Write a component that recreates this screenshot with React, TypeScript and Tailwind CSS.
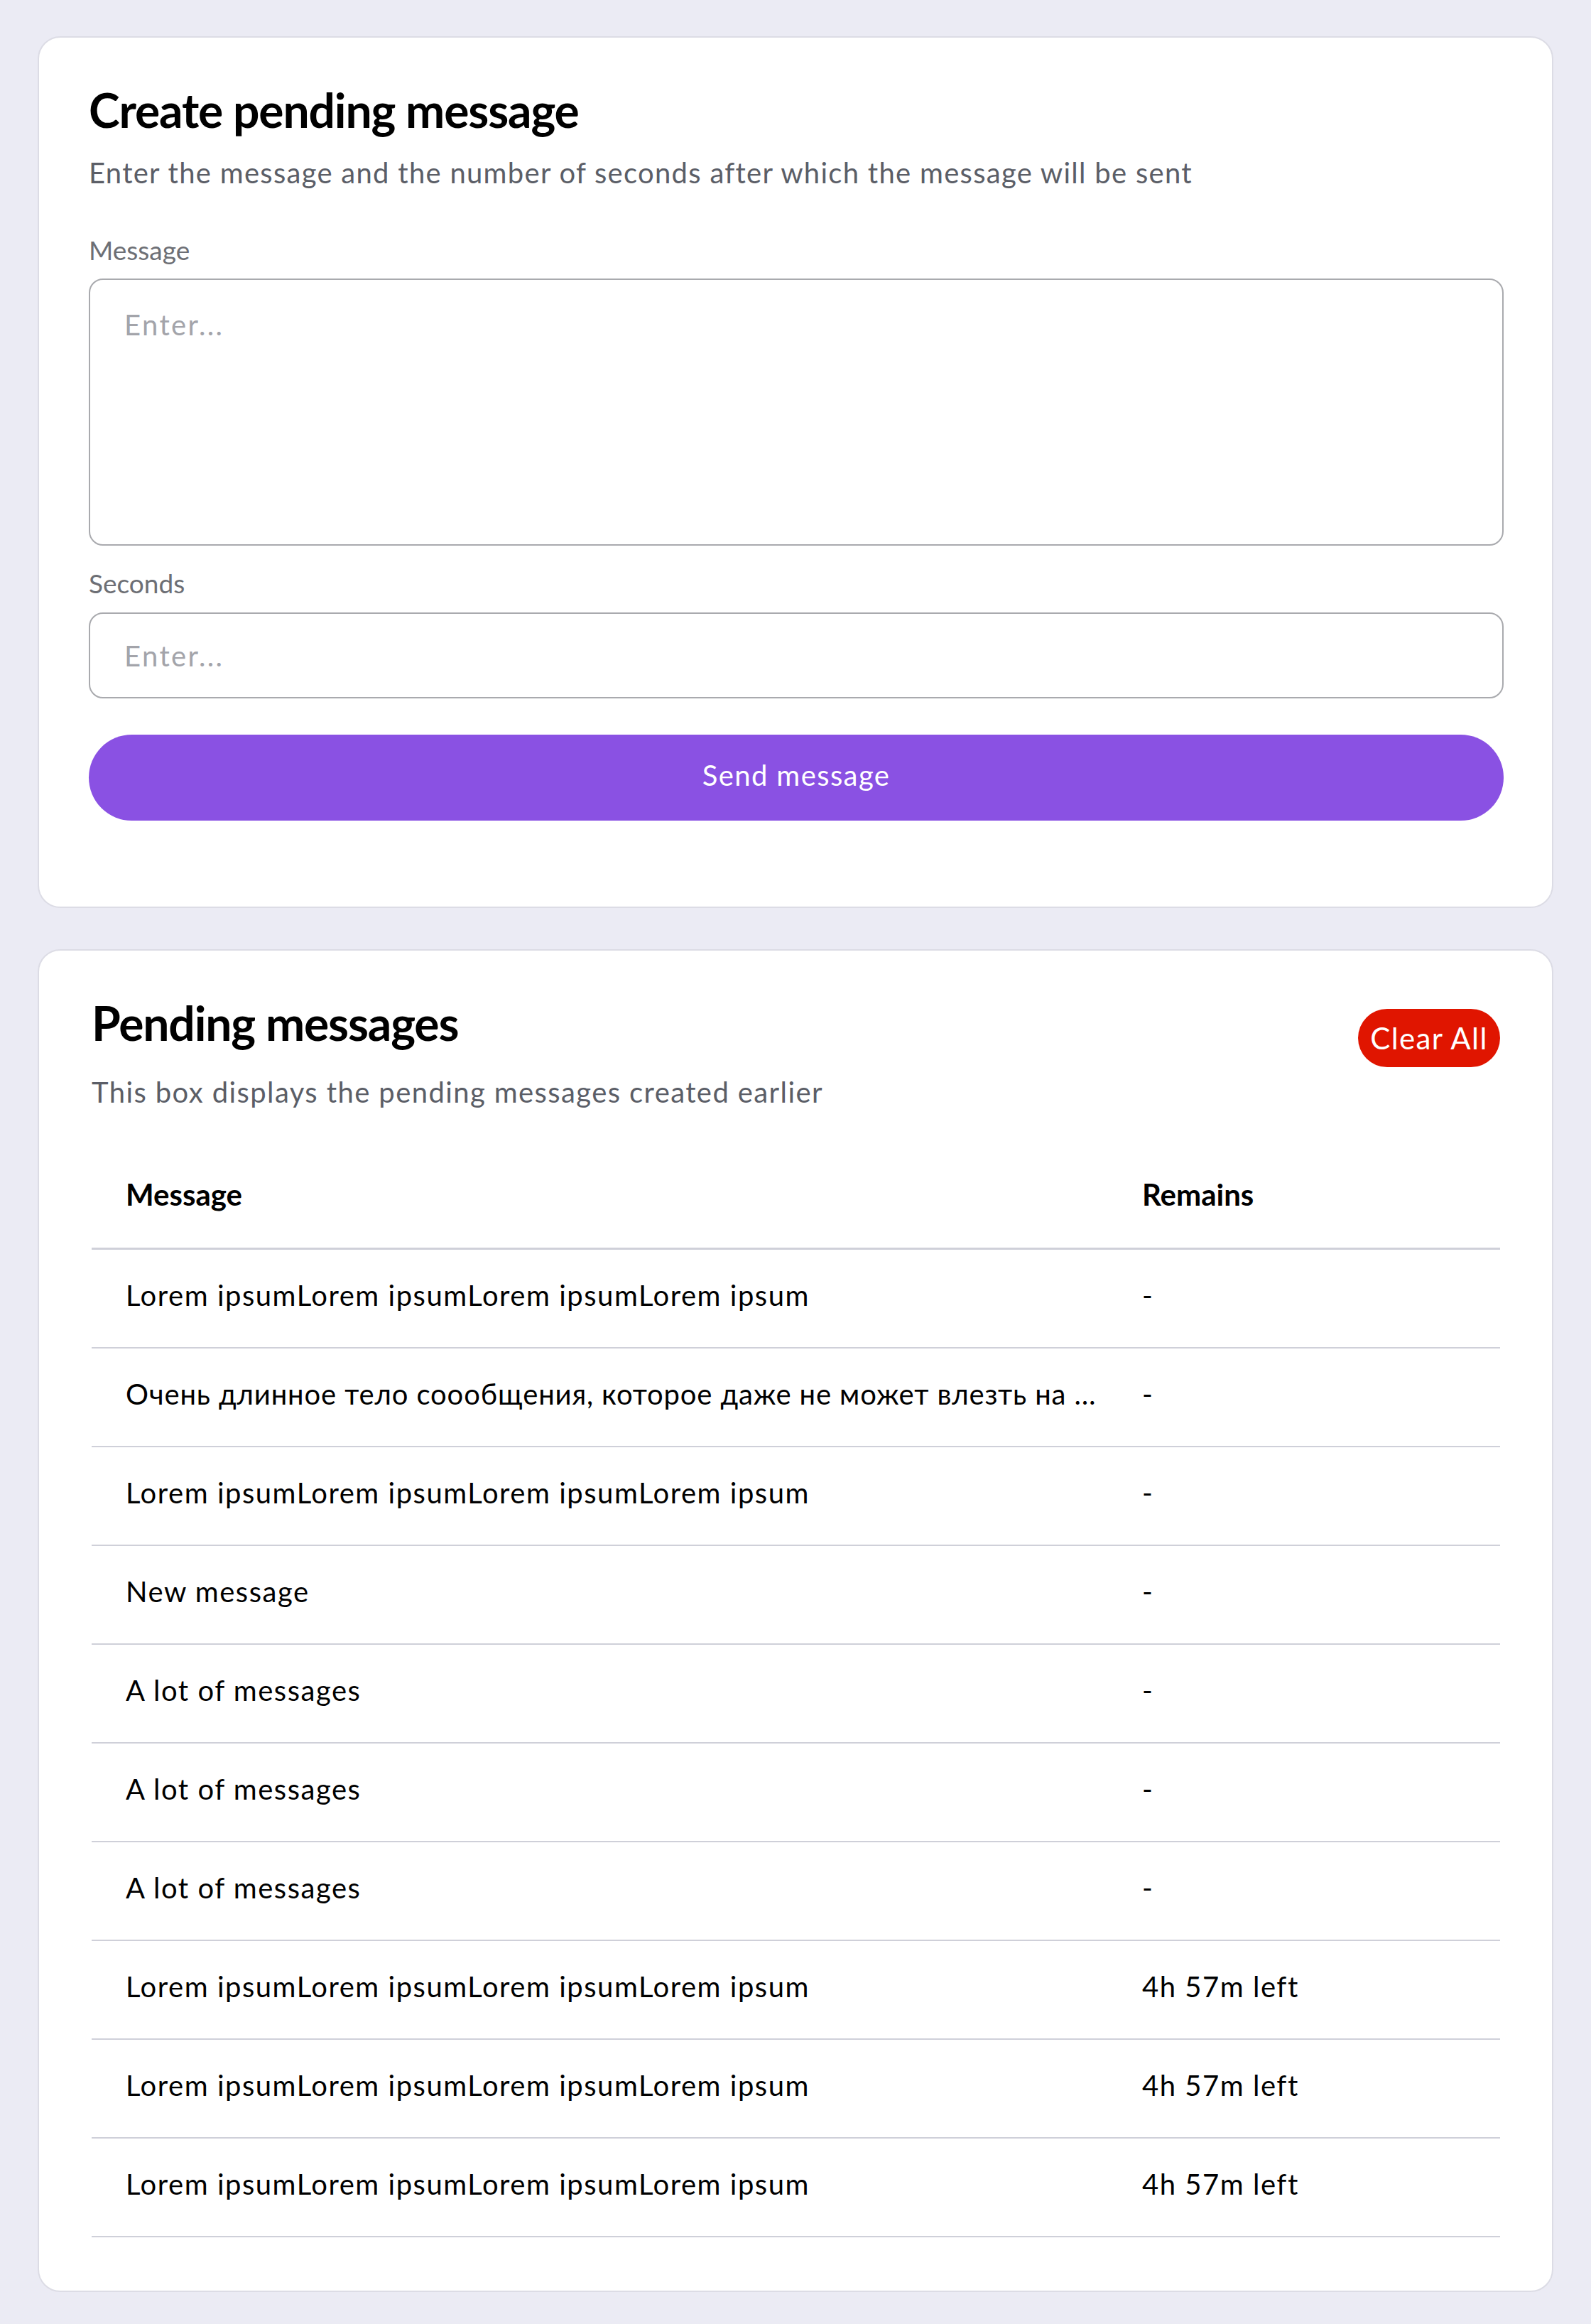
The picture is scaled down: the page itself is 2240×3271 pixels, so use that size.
import React from "react";

const rows: { m: string; r: string; tight?: boolean }[] = [
  { m: "Lorem ipsumLorem ipsumLorem ipsumLorem ipsum", r: "-" },
  {
    m: "Очень длинное тело соообщения, которое даже не может влезть на одну строку таблицы",
    r: "-",
    tight: true,
  },
  { m: "Lorem ipsumLorem ipsumLorem ipsumLorem ipsum", r: "-" },
  { m: "New message", r: "-" },
  { m: "A lot of messages", r: "-" },
  { m: "A lot of messages", r: "-" },
  { m: "A lot of messages", r: "-" },
  { m: "Lorem ipsumLorem ipsumLorem ipsumLorem ipsum", r: "4h 57m left" },
  { m: "Lorem ipsumLorem ipsumLorem ipsumLorem ipsum", r: "4h 57m left" },
  { m: "Lorem ipsumLorem ipsumLorem ipsumLorem ipsum", r: "4h 57m left" },
];

export default function App() {
  return (
    <div className="min-h-screen bg-[#ebebf4] px-[53px] pt-[51px] pb-[46px] flex flex-col gap-[58px] font-['Lato','Noto_Sans',sans-serif] text-black">
      <section className="bg-white border-2 border-[#dcdce5] rounded-[32px] pl-[70px] pr-[68px] pt-[62px] pb-[121px]">
        <h1 className="text-[66px] leading-[80px] font-bold tracking-[-1.15px]">Create pending message</h1>
        <p className="mt-[24px] text-[40px] leading-[48px] tracking-[0.032em] text-[#5b5e67]">
          Enter the message and the number of seconds after which the message will be sent
        </p>
        <label className="block mt-[63px] text-[37px] leading-[44px] text-[#6d6f75]">Message</label>
        <textarea
          className="block mt-[18px] w-full h-[376px] resize-none border-2 border-[#a9aaae] rounded-[20px] px-[48px] pt-[39px] text-[40px] leading-[48px] tracking-[0.06em] outline-none placeholder:text-[#a3a4aa]"
          placeholder="Enter..."
        />
        <label className="block mt-[31px] text-[37px] leading-[44px] text-[#6d6f75]">Seconds</label>
        <input
          className="block mt-[19px] w-full h-[121px] border-2 border-[#a9aaae] rounded-[20px] px-[48px] text-[40px] tracking-[0.06em] outline-none placeholder:text-[#a3a4aa]"
          placeholder="Enter..."
        />
        <button className="mt-[51px] w-full h-[121px] pb-[7px] rounded-full bg-[#8a51e3] text-white text-[40px] leading-[48px] tracking-[0.035em]">
          Send message
        </button>
      </section>

      <section className="bg-white border-2 border-[#dcdce5] rounded-[32px] pl-[74px] pr-[73px] pt-[62px] pb-[75px]">
        <div className="flex justify-between items-start">
          <div>
            <h2 className="text-[66px] leading-[80px] font-bold tracking-[-1.15px]">Pending messages</h2>
            <p className="mt-[33px] text-[40px] leading-[48px] tracking-[0.035em] text-[#5b5e67]">
              This box displays the pending messages created earlier
            </p>
          </div>
          <button className="mt-[20px] w-[200px] h-[82px] rounded-full bg-[#e01500] text-white text-[42px] leading-[50px] tracking-[0.033em]">
            Clear All
          </button>
        </div>

        <div className="mt-[45px]">
          <div className="grid grid-cols-[1433px_1fr] h-[153px] border-b-[3px] border-[#cfd0d9] font-bold text-[42px] leading-[50px]">
            <div className="flex items-center pl-[48px]">Message</div>
            <div className="flex items-center pl-[46px]">Remains</div>
          </div>
          {rows.map((row, i) => (
            <div
              key={i}
              className="grid grid-cols-[1433px_1fr] h-[139px] border-b-2 border-[#cfd0d9] text-[40px] leading-[48px] tracking-[0.038em]"
            >
              <div className="flex items-center pl-[48px] pr-[14px] pb-[9px] min-w-0">
                <span className={row.tight ? "block truncate tracking-[0.022em]" : "block truncate"}>{row.m}</span>
              </div>
              <div className="flex items-center pl-[46px] pb-[9px]">{row.r}</div>
            </div>
          ))}
        </div>
      </section>
    </div>
  );
}
